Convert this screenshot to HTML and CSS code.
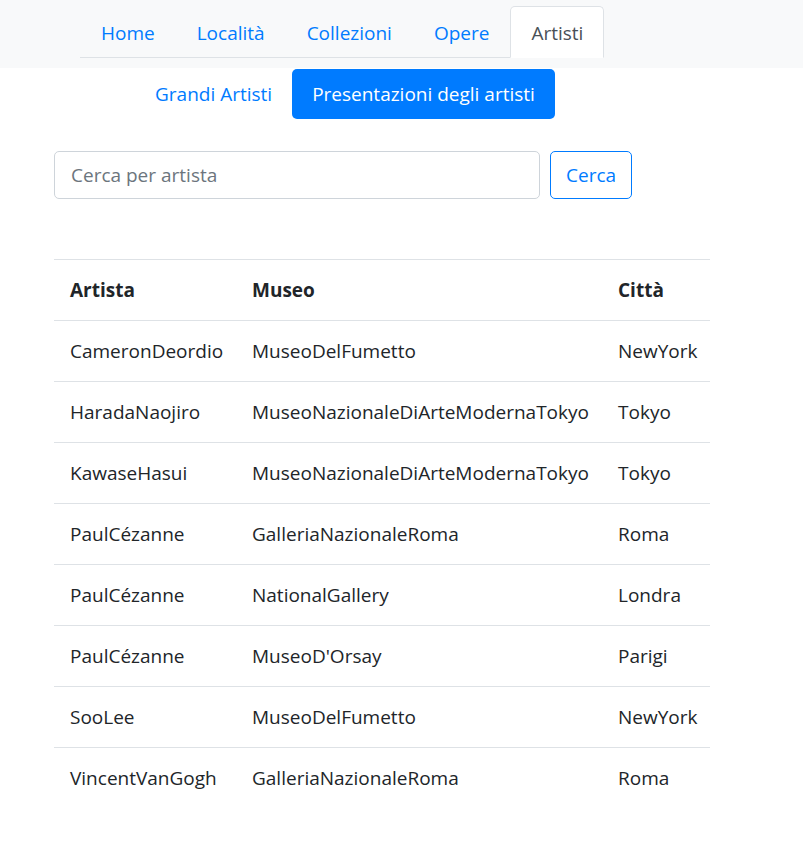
FILE: index.html
```html
<!DOCTYPE html>
<html lang="it">
<head>
<meta charset="utf-8">
<title>Artisti</title>
<link rel="stylesheet" href="styles.css">
</head>
<body>
<div class="navbar">
  <ul class="tabs">
    <li><a class="tab" href="#">Home</a></li>
    <li><a class="tab" href="#">Località</a></li>
    <li><a class="tab" href="#">Collezioni</a></li>
    <li><a class="tab" href="#">Opere</a></li>
    <li><a class="tab active" href="#">Artisti</a></li>
  </ul>
</div>
<ul class="pills">
  <li><a class="pill" href="#">Grandi Artisti</a></li>
  <li><a class="pill active" href="#">Presentazioni degli artisti</a></li>
</ul>
<form class="search">
  <input class="search-input" type="text" placeholder="Cerca per artista">
  <button class="search-btn" type="button">Cerca</button>
</form>
<table class="table">
  <colgroup><col class="c1"><col class="c2"><col class="c3"></colgroup>
  <thead>
    <tr><th>Artista</th><th>Museo</th><th>Città</th></tr>
  </thead>
  <tbody>
    <tr><td>CameronDeordio</td><td>MuseoDelFumetto</td><td>NewYork</td></tr>
    <tr><td>HaradaNaojiro</td><td>MuseoNazionaleDiArteModernaTokyo</td><td>Tokyo</td></tr>
    <tr><td>KawaseHasui</td><td>MuseoNazionaleDiArteModernaTokyo</td><td>Tokyo</td></tr>
    <tr><td>PaulCézanne</td><td>GalleriaNazionaleRoma</td><td>Roma</td></tr>
    <tr><td>PaulCézanne</td><td>NationalGallery</td><td>Londra</td></tr>
    <tr><td>PaulCézanne</td><td>MuseoD'Orsay</td><td>Parigi</td></tr>
    <tr><td>SooLee</td><td>MuseoDelFumetto</td><td>NewYork</td></tr>
    <tr><td>VincentVanGogh</td><td>GalleriaNazionaleRoma</td><td>Roma</td></tr>
  </tbody>
</table>
</body>
</html>
```

FILE: styles.css
```css
* { box-sizing: border-box; }
html, body {
  margin: 0;
  padding: 0;
  background: #fff;
  color: #212529;
  font-family: "Open Sans", "Noto Sans", sans-serif;
  font-size: 19px;
  line-height: 30px;
}
a { text-decoration: none; color: #007bff; }
ul { list-style: none; margin: 0; padding: 0; }

.navbar {
  background: #f8f9fa;
  padding: 6px 0 10px 80px;
}
.tabs {
  display: inline-flex;
  border-bottom: 1px solid #dee2e6;
  vertical-align: top;
}
.tab {
  display: block;
  padding: 11px 20px 9px;
  border: 1px solid transparent;
  border-radius: 5px 5px 0 0;
  margin-bottom: -1px;
}
.tab.active {
  color: #495057;
  background: #fff;
  border-color: #dee2e6 #dee2e6 #fff;
}

.pills {
  display: flex;
  margin: 1px 0 0 135px;
}
.pill {
  display: block;
  padding: 10px 20px;
  border-radius: 5px;
}
.pill.active {
  background: #007bff;
  color: #fff;
}

.search {
  display: flex;
  gap: 10px;
  margin: 32px 0 0 54px;
}
.search-input {
  width: 486px;
  height: 48px;
  padding: 7px 16px;
  border: 1px solid #ced4da;
  border-radius: 5px;
  font: inherit;
  color: #495057;
}
.search-input::placeholder { color: #6c757d; }
.search-btn {
  height: 48px;
  padding: 7px 15px;
  border: 1px solid #007bff;
  border-radius: 5px;
  background: #fff;
  color: #007bff;
  font: inherit;
}

.table {
  margin: 60px 0 0 54px;
  width: 656px;
  border-collapse: collapse;
  table-layout: fixed;
}
.c1 { width: 182px; }
.c2 { width: 366px; }
.c3 { width: 108px; }
.table th, .table td {
  padding: 15px 15px 15px 16px;
  border-top: 1px solid #dee2e6;
  text-align: left;
  vertical-align: top;
  white-space: nowrap;
}
.table th { font-weight: 700; }
```
